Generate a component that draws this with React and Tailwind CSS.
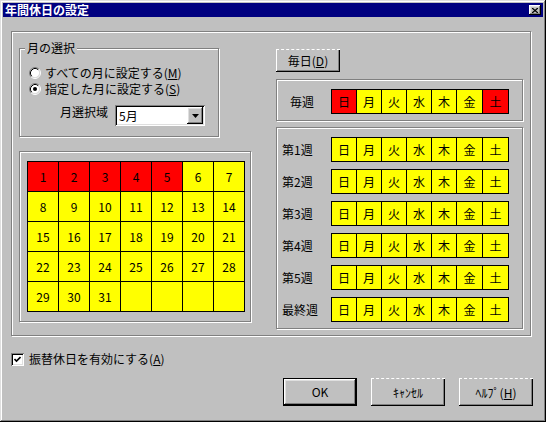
import React from "react";

const DAYS = ["日", "月", "火", "水", "木", "金", "土"];
const WEEKS = ["第1週", "第2週", "第3週", "第4週", "第5週", "最終週"];
const HOLIDAYS = [1, 2, 3, 4, 5];

const etched = "border border-[#808080] shadow-[inset_1px_1px_#fff,1px_1px_#fff]";
const raised =
    "shadow-[inset_-1px_-1px_#000,inset_1px_1px_#fff,inset_-2px_-2px_#808080,inset_2px_2px_#dfdfdf]";
const raisedDashed =
    "border-t border-dashed border-t-white shadow-[inset_-1px_-1px_#000,inset_1px_0_#fff,inset_-2px_-2px_#808080]";
const sunken =
    "shadow-[inset_1px_1px_#808080,inset_-1px_-1px_#fff,inset_2px_2px_#000,inset_-2px_-2px_#dfdfdf]";

function Radio({ checked }) {
    return (
        <svg width="12" height="12" viewBox="0 0 12 12" className="shrink-0">
            <circle cx="6" cy="6" r="4.5" fill="#fff" />
            <path d="M2.11 9.89 A5.5 5.5 0 0 1 9.89 2.11" stroke="#808080" fill="none" />
            <path d="M2.11 9.89 A5.5 5.5 0 0 0 9.89 2.11" stroke="#fff" fill="none" />
            <path d="M2.82 9.18 A4.5 4.5 0 0 1 9.18 2.82" stroke="#000" fill="none" />
            <path d="M2.82 9.18 A4.5 4.5 0 0 0 9.18 2.82" stroke="#dfdfdf" fill="none" />
            {checked && <circle cx="6" cy="6" r="2" fill="#000" />}
        </svg>
    );
}

function DayCells({ red = [] }) {
    return (
        <div className="grid grid-cols-[repeat(5,24px)_25px_25px] auto-rows-[23px] gap-px bg-black p-px w-fit h-fit self-start">
            {DAYS.map((d, i) => (
                <div
                    key={d}
                    className={`flex items-center justify-center ${red.includes(i) ? "bg-[#ff0000]" : "bg-[#ffff00]"}`}
                >
                    {d}
                </div>
            ))}
        </div>
    );
}

export default function App() {
    const cells = Array.from({ length: 35 }, (_, i) => (i < 31 ? i + 1 : null));

    return (
        <div className="w-[546px] h-[422px] bg-[#c0c0c0] p-[3px] flex flex-col text-black text-[12px] leading-[14px] font-['Noto_Sans_CJK_JP',sans-serif] shadow-[inset_-1px_-1px_#000,inset_1px_1px_#dfdfdf,inset_-2px_-2px_#808080,inset_2px_2px_#fff]">
            {/* title bar */}
            <div className="h-[14px] bg-[#000080] flex items-center justify-between pl-[2px] pr-[2px]">
                <span className="text-white font-bold">年間休日の設定</span>
                <div className={`w-[12px] h-[10px] bg-[#c0c0c0] flex items-center justify-center ${raised}`}>
                    <svg width="6" height="5" viewBox="0 0 6 5">
                        <path d="M0 0 L6 5 M6 0 L0 5" stroke="#000" strokeWidth="1.3" />
                    </svg>
                </div>
            </div>

            <div className="flex flex-col pl-[8px] pt-[14px]">
                {/* main frame */}
                <div className={`w-[520px] h-[305px] flex gap-[25px] pl-[7px] pt-[16px] ${etched}`}>
                    {/* left column */}
                    <div className="w-[232px] flex flex-col">
                        <div className={`relative w-[200px] h-[89px] flex flex-col pl-[9px] pt-[16px] ${etched}`}>
                            <span className="absolute left-[5px] -top-[8px] px-[2px] bg-[#c0c0c0]">月の選択</span>
                            <div className="h-[16px] flex items-center gap-[4px]">
                                <Radio />
                                <span>
                                    すべての月に設定する(<span className="underline">M</span>)
                                </span>
                            </div>
                            <div className="h-[16px] flex items-center gap-[4px]">
                                <Radio checked />
                                <span>
                                    指定した月に設定する(<span className="underline">S</span>)
                                </span>
                            </div>
                            <div className="flex items-start mt-[8px] pl-[31px]">
                                <span className="w-[55px]">月選択域</span>
                                <div className={`w-[90px] h-[21px] bg-white flex items-center p-[2px] ${sunken}`}>
                                    <span className="pl-[2px]">5月</span>
                                    <div className={`ml-auto w-[16px] h-[17px] bg-[#c0c0c0] flex items-center justify-center ${raised}`}>
                                        <svg width="7" height="4" viewBox="0 0 7 4">
                                            <polygon points="0,0 7,0 3.5,4" fill="#000" />
                                        </svg>
                                    </div>
                                </div>
                            </div>
                        </div>

                        <div className={`mt-[14px] h-[171px] pl-[7px] pt-[9px] ${etched}`}>
                            <div className="grid grid-cols-[repeat(7,30px)] auto-rows-[29px] gap-px bg-black p-px w-fit">
                                {cells.map((n, i) => (
                                    <div
                                        key={i}
                                        className={`flex items-center justify-center ${HOLIDAYS.includes(n) ? "bg-[#ff0000]" : "bg-[#ffff00]"}`}
                                    >
                                        {n}
                                    </div>
                                ))}
                            </div>
                        </div>
                    </div>

                    {/* right column */}
                    <div className="w-[247px] flex flex-col pt-[1px]">
                        <button className={`w-[64px] h-[23px] bg-[#c0c0c0] flex items-center justify-center ${raisedDashed}`}>
                            毎日(<span className="underline">D</span>)
                        </button>

                        <div className={`mt-[7px] h-[42px] flex items-start pl-[13px] pt-[9px] ${etched}`}>
                            <span className="w-[41px] h-[25px] flex items-center">毎週</span>
                            <DayCells red={[0, 6]} />
                        </div>

                        <div className={`mt-[6px] h-[202px] flex flex-col gap-[7px] pl-[5px] pt-[9px] ${etched}`}>
                            {WEEKS.map((w) => (
                                <div key={w} className="flex">
                                    <span className="w-[49px] h-[25px] flex items-center">{w}</span>
                                    <DayCells />
                                </div>
                            ))}
                        </div>
                    </div>
                </div>

                {/* checkbox */}
                <div className="mt-[16px] flex items-center gap-[5px]">
                    <div className={`w-[13px] h-[13px] bg-white flex items-center justify-center ${sunken}`}>
                        <svg width="7" height="7" viewBox="0 0 7 7">
                            <path d="M0.5 3 L2.5 5 L6.5 1" stroke="#000" strokeWidth="1.6" fill="none" />
                        </svg>
                    </div>
                    <span>
                        振替休日を有効にする(<span className="underline">A</span>)
                    </span>
                </div>

                {/* buttons */}
                <div className="mt-[12px] flex justify-end gap-[14px] pr-[10px]">
                    <button className="w-[74px] h-[28px] border border-black bg-[#c0c0c0]">
                        <div className={`w-full h-full flex items-center justify-center ${raised}`}>OK</div>
                    </button>
                    <button className={`w-[74px] h-[28px] bg-[#c0c0c0] flex items-center justify-center ${raisedDashed}`}>
                        ｷｬﾝｾﾙ
                    </button>
                    <button className={`w-[74px] h-[28px] bg-[#c0c0c0] flex items-center justify-center ${raisedDashed}`}>
                        ﾍﾙﾌﾟ(<span className="underline">H</span>)
                    </button>
                </div>
            </div>
        </div>
    );
}
